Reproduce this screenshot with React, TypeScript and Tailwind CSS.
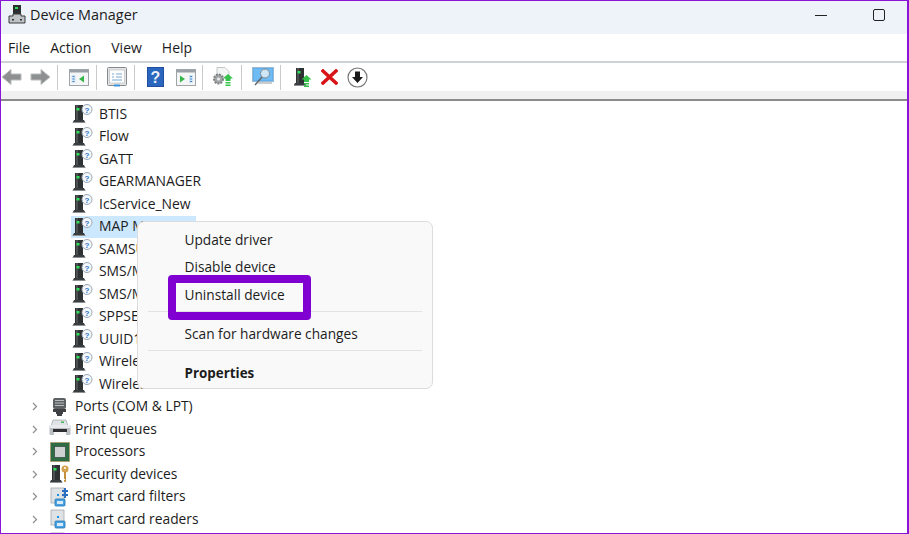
const font = "font-['Open_Sans','Noto_Sans',sans-serif]";

function DeviceTower({ x = 0 }: { x?: number }) {
  return (
    <g transform={`translate(${x} 0)`}>
      <path d="M2 1h8v15H2z" fill="#2f3233" />
      <path d="M3 1h2v15H3z" fill="#4c5052" />
      <rect x="3.500" y="4" width="3" height="2.500" fill="#2fe05a" />
      <path d="M1 16h10l1.500 3H-.5z" fill="#3a3d3f" />
      <path d="M0 18h12v1H0z" fill="#8d9193" />
    </g>
  );
}

function UnknownDevice() {
  return (
    <svg width="22" height="20" viewBox="0 0 22 20" className="shrink-0">
      <DeviceTower x={1} />
      <circle cx="15" cy="5.500" r="5" fill="#f4f7fb" stroke="#9aa7b5" strokeWidth="1" />
      <text x="15" y="8.500" textAnchor="middle" fontSize="8" fontFamily="Liberation Sans, sans-serif" fill="#2a72c8" fontWeight="700">?</text>
    </svg>
  );
}

function PortIcon() {
  return (
    <svg width="20" height="20" viewBox="0 0 20 20">
      <rect x="3" y="1" width="13" height="11" rx="2" fill="#5d6163" />
      <path d="M5 3.500h9M5 6h9M5 8.500h9" stroke="#b8bcbe" strokeWidth="1" />
      <path d="M3 12h13v3h-3v2h-1v2H7v-2H6v-2H3z" fill="#3e4143" />
    </svg>
  );
}

function PrinterIcon() {
  return (
    <svg width="22" height="20" viewBox="0 0 22 20">
      <path d="M4 1h13l2 6H2z" fill="#dfe3e5" stroke="#8f9496" strokeWidth="0.600" />
      <rect x="12" y="2.500" width="3" height="1.500" fill="#45b558" />
      <rect x="0.500" y="6" width="21" height="10" rx="1.500" fill="#b9bec1" />
      <rect x="0.500" y="6" width="21" height="3" fill="#e8eaeb" />
      <rect x="4" y="10" width="14" height="3" fill="#2d2f31" />
      <rect x="5" y="13" width="12" height="3" fill="#fafafa" />
    </svg>
  );
}

function CpuIcon() {
  return (
    <svg width="20" height="20" viewBox="0 0 20 20">
      <rect x="0.500" y="0.500" width="19" height="19" fill="#2f6b46" stroke="#b78a3c" strokeWidth="1" strokeDasharray="1 1" />
      <rect x="1.500" y="1.500" width="17" height="17" fill="#2f6b46" />
      <rect x="4.500" y="4.500" width="11" height="11" fill="#cfd2d0" stroke="#1f3a2b" strokeWidth="0.600" />
    </svg>
  );
}

function SecurityIcon() {
  return (
    <svg width="20" height="20" viewBox="0 0 20 20">
      <DeviceTower x={0} />
      <circle cx="15" cy="5" r="3.500" fill="#d3a24f" />
      <circle cx="15" cy="4" r="1" fill="#fff" />
      <path d="M14 8h2v10h-1.500l-.5-1v-1h1v-1h-1z" fill="#c48f3d" />
    </svg>
  );
}

function CardIcon({ chip }: { chip?: boolean }) {
  return (
    <svg width="20" height="20" viewBox="0 0 20 20">
      <rect x="1" y="1" width="13" height="15" fill="#dfe3e6" stroke="#a4a9ad" strokeWidth="0.800" />
      <rect x="7" y="7" width="2" height="2" fill="#1e90e8" />
      <rect x="5" y="12" width="10" height="7" rx="1" fill="#4aa3e0" stroke="#2273b5" strokeWidth="0.800" />
      <rect x="7" y="14" width="6" height="3" fill="#d7ecfa" />
      {chip && <path d="M14 1h2v2h2v2h-2v2h2v2h-2v2h-2V9h-2V7h2V5h-2V3h2z" fill="#2c6fc0" />}
    </svg>
  );
}

function NavArrow({ flip }: { flip?: boolean }) {
  return (
    <svg width="21" height="18" viewBox="0 0 21 18" className={flip ? "-scale-x-100" : ""}>
      <path d="M10 1.500 1 9l9 7.500V12h10V6H10z" fill="#8d9091" stroke="#b9bbbc" strokeWidth="1" />
    </svg>
  );
}

function PaneIcon({ flip }: { flip?: boolean }) {
  return (
    <svg width="20" height="17" viewBox="0 0 20 17">
      <rect x="0.500" y="0.500" width="19" height="16" fill="#f5f6f7" stroke="#9ea4a8" />
      <rect x="1" y="1" width="18" height="2.500" fill="#9aa0a5" />
      {flip ? (
        <>
          <path d="M4 6.500v7l5-3.500z" fill="#39b54a" />
          <path d="M13 6h4v8h-4z" fill="#d4e4f3" />
          <path d="M14 7.500h2M14 10h2M14 12.500h2" stroke="#3b87d0" />
        </>
      ) : (
        <>
          <path d="M2.500 6h4v8h-4z" fill="#d4e4f3" />
          <path d="M3.500 7.500h2M3.500 10h2M3.500 12.500h2" stroke="#3b87d0" />
          <path d="M15 6.500v7l-5-3.500z" fill="#39b54a" />
        </>
      )}
    </svg>
  );
}

function SheetIcon() {
  return (
    <svg width="20" height="20" viewBox="0 0 20 20">
      <rect x="0.500" y="0.500" width="19" height="18" rx="1" fill="#e3e4e5" stroke="#85898c" />
      <rect x="2.500" y="3" width="15" height="13" fill="#fdfdfd" stroke="#b5b8ba" strokeWidth="0.600" />
      <path d="M5 7h2M5 10h2M9 7h6M9 10h6M5 13h10" stroke="#7aa9d6" strokeWidth="1" />
      <rect x="7" y="17.500" width="6" height="2" fill="#3a94e0" />
    </svg>
  );
}

function HelpIcon() {
  return (
    <svg width="17" height="20" viewBox="0 0 17 20">
      <rect width="17" height="20" fill="#1f4f9e" />
      <rect x="1" y="1" width="15" height="18" fill="#2a66bd" />
      <text x="8.500" y="16" textAnchor="middle" fontSize="16" fontWeight="700" fontFamily="Liberation Sans, sans-serif" fill="#e8eef6">?</text>
    </svg>
  );
}

function GreenUp({ x, y }: { x: number; y: number }) {
  return (
    <g transform={`translate(${x} ${y})`}>
      <path d="M5 0l5 4.500H7.500V7h-5V4.500H0z" fill="#35c24b" />
      <path d="M2.500 8h5v1.500h-5zM2.500 10.500h5V12h-5z" fill="#35c24b" />
    </g>
  );
}

function ScanDocIcon() {
  return (
    <svg width="22" height="20" viewBox="0 0 22 20">
      <path d="M5 0.500h8l4 4V10H5z" fill="#f3f4f4" stroke="#c4c7c9" />
      <circle cx="6.500" cy="12" r="4.500" fill="#a3a6a8" stroke="#7f8284" strokeWidth="2" strokeDasharray="2 1" />
      <circle cx="6.500" cy="12" r="1.500" fill="#eee" />
      <GreenUp x={11} y={7} />
    </svg>
  );
}

function MonitorScanIcon() {
  return (
    <svg width="22" height="20" viewBox="0 0 22 20">
      <rect x="0.500" y="0.500" width="21" height="14" fill="#5fb0ec" stroke="#9dbad2" />
      <rect x="2" y="2" width="18" height="11" fill="#6ebcf3" />
      <circle cx="13" cy="6.500" r="4.500" fill="#cfe6f6" stroke="#7c8a94" />
      <path d="M10 10 3 18" stroke="#62686c" strokeWidth="1.500" />
      <path d="M6 16h14" stroke="#b9bdc0" strokeWidth="1.500" />
    </svg>
  );
}

function AddDriverIcon() {
  return (
    <svg width="18" height="20" viewBox="0 0 18 20">
      <DeviceTower x={0} />
      <GreenUp x={7.500} y={8} />
    </svg>
  );
}

function RemoveIcon() {
  return (
    <svg width="17" height="16" viewBox="0 0 17 16">
      <path d="M2 2 15 14M15 2 2 14" stroke="#d81418" strokeWidth="3.500" strokeLinecap="square" />
    </svg>
  );
}

function DownloadIcon() {
  return (
    <svg width="21" height="21" viewBox="0 0 21 21">
      <circle cx="10.500" cy="10.500" r="9.500" fill="#fff" stroke="#77797b" strokeWidth="1.200" />
      <path d="M8 4.500h5v5.500h3l-5.500 6L5 10h3z" fill="#1a1a1a" />
    </svg>
  );
}

function Sep() {
  return <div className="w-px h-[25px] bg-[#c9cbcc] shrink-0" />;
}

function TreeRow({ label, selected }: { label: string; selected?: boolean }) {
  return (
    <div className="h-[22.5px] flex items-center pl-[70px]">
      <div className={`flex items-center h-[22.5px] pl-[1px] whitespace-nowrap overflow-hidden ${selected ? "bg-[#cce8ff] w-[125px]" : ""}`}>
        <UnknownDevice />
        <span className="ml-[5px] text-[13.9px] text-[#1c1c1c]">{label}</span>
      </div>
    </div>
  );
}

function GroupRow({ label, icon }: { label: string; icon: React.ReactNode }) {
  return (
    <div className="h-[22.5px] flex items-center pl-[31px] whitespace-nowrap">
      <svg width="6" height="9" viewBox="0 0 6 9" className="shrink-0">
        <path d="M1 1l3.500 3.500L1 8" fill="none" stroke="#8e8e8e" strokeWidth="1.200" />
      </svg>
      <div className="w-[22px] ml-[11px] flex justify-center shrink-0">{icon}</div>
      <span className="ml-[4px] text-[13.8px] text-[#1c1c1c]">{label}</span>
    </div>
  );
}

function MenuItem({ label, bold }: { label: string; bold?: boolean }) {
  return <div className={`pl-[46.5px] leading-[20px] text-[#1c1c1c] ${bold ? "text-[13.4px] font-bold" : "text-[13.7px]"}`}>{label}</div>;
}

export default function App() {
  return (
    <div className={`relative w-[909px] h-[534px] overflow-hidden bg-white border-t border-l border-b border-r-2 border-[#8a14d8] ${font}`}>
      {/* Title bar */}
      <div className="h-[33px] bg-[#eef3fa] flex items-center pb-[5px]">
        <svg width="22" height="22" viewBox="0 0 22 22" className="ml-[5px] shrink-0">
          <rect x="7" y="1" width="8" height="10" fill="#2d3031" />
          <rect x="9" y="3" width="3" height="2" fill="#2fe05a" />
          <path d="M7 10v2H3v7h16v-7h-4v-2z" fill="#bfc3c5" stroke="#3a3d3f" strokeWidth="1" />
          <rect x="6" y="15" width="2" height="1.500" fill="#333" />
          <rect x="14" y="15" width="2" height="1.500" fill="#333" />
        </svg>
        <span className="ml-[2px] text-[14.4px] text-[#1c1c1c]">Device Manager</span>
        <div className="ml-auto flex items-center">
          <div className="w-[12px] h-px bg-[#222]" />
          <div className="ml-[46px] mr-[22px] w-[12px] h-[12px] border border-[#222] rounded-[2px]" />
        </div>
      </div>

      {/* Menu bar */}
      <div className="h-[29px] flex items-center pl-[7px] gap-[20px] text-[14px] text-[#1c1c1c] border-b-2 border-[#cfd2d4]">
        <span>File</span>
        <span>Action</span>
        <span>View</span>
        <span>Help</span>
      </div>

      {/* Toolbar */}
      <div className="h-[28px] flex items-center">
        <div className="w-[26px] shrink-0"><NavArrow /></div>
        <div className="w-[30px] pl-[3px] shrink-0"><NavArrow flip /></div>
        <Sep />
        <div className="w-[38px] pl-[11px] shrink-0"><PaneIcon /></div>
        <Sep />
        <div className="w-[37px] pl-[10px] shrink-0"><SheetIcon /></div>
        <Sep />
        <div className="w-[40px] pl-[12px] shrink-0"><HelpIcon /></div>
        <div className="w-[27px] pl-[1px] shrink-0"><PaneIcon flip /></div>
        <Sep />
        <div className="w-[38px] pl-[9px] shrink-0"><ScanDocIcon /></div>
        <Sep />
        <div className="w-[38px] pl-[10px] shrink-0"><MonitorScanIcon /></div>
        <Sep />
        <div className="w-[39px] pl-[13px] shrink-0"><AddDriverIcon /></div>
        <div className="w-[27px] pl-[1px] shrink-0"><RemoveIcon /></div>
        <div className="w-[30px] shrink-0"><DownloadIcon /></div>
      </div>

      {/* Band above the tree */}
      <div className="h-[10px] bg-[#f0f0f0] border-b-2 border-[#8b8b8b]" />

      {/* Device tree */}
      <div className="pt-[2px]">
        <TreeRow label="BTIS" />
        <TreeRow label="Flow" />
        <TreeRow label="GATT" />
        <TreeRow label="GEARMANAGER" />
        <TreeRow label="IcService_New" />
        <TreeRow label="MAP MAS-MSE" selected />
        <TreeRow label="SAMSUNG" />
        <TreeRow label="SMS/MMS" />
        <TreeRow label="SMS/MMS" />
        <TreeRow label="SPPSE" />
        <TreeRow label="UUID1" />
        <TreeRow label="Wireless" />
        <TreeRow label="Wireless" />
        <GroupRow label="Ports (COM & LPT)" icon={<PortIcon />} />
        <GroupRow label="Print queues" icon={<PrinterIcon />} />
        <GroupRow label="Processors" icon={<CpuIcon />} />
        <GroupRow label="Security devices" icon={<SecurityIcon />} />
        <GroupRow label="Smart card filters" icon={<CardIcon chip />} />
        <GroupRow label="Smart card readers" icon={<CardIcon />} />
        <GroupRow label="" icon={<CardIcon chip />} />
      </div>

      {/* Context menu */}
      <div className="absolute left-[136px] top-[220px] w-[296px] h-[168px] bg-[#f9f9f9] border border-[#dcdcdc] rounded-[7px] pt-[8px]">
        <MenuItem label="Update driver" />
        <div className="h-[7px]" />
        <MenuItem label="Disable device" />
        <div className="h-[8px]" />
        <MenuItem label="Uninstall device" />
        <div className="mt-[6px] mx-[10px] h-px bg-[#e3e3e3]" />
        <div className="h-[12px]" />
        <MenuItem label="Scan for hardware changes" />
        <div className="mt-[6px] mx-[10px] h-px bg-[#e3e3e3]" />
        <div className="h-[12px]" />
        <MenuItem label="Properties" bold />
      </div>

      {/* Purple callout */}
      <div className="absolute left-[167px] top-[274px] w-[143px] h-[45px] border-[8px] border-[#8000d2] rounded-[4px]" />
    </div>
  );
}
